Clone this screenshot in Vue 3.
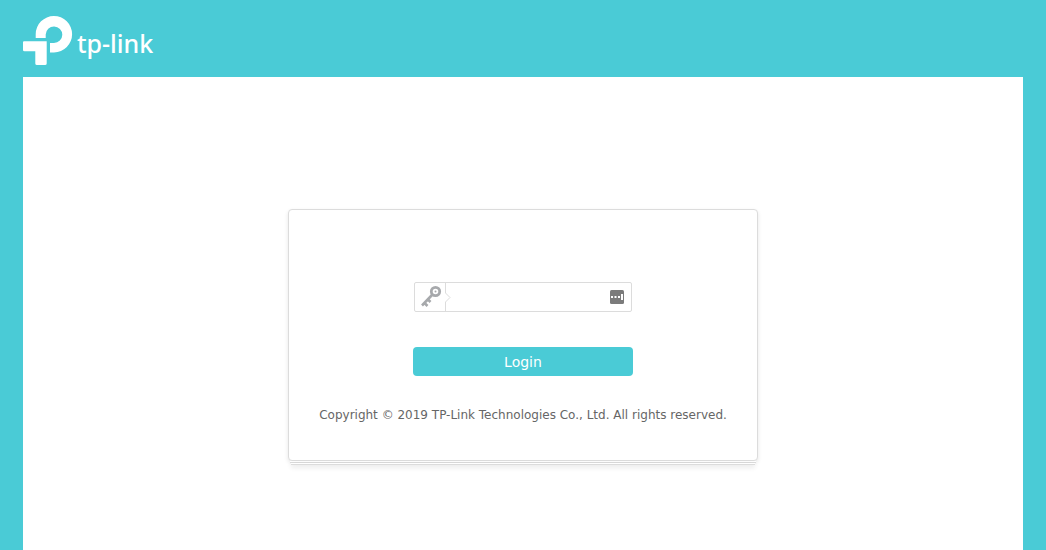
<script setup>
import { ref } from 'vue'

const password = ref('')
</script>

<template>
  <div class="page">
    <header class="header">
      <svg class="logo" width="140" height="52" viewBox="0 0 140 52" role="img" aria-label="tp-link">
        <path class="mark" d="M12.7 22V18.2A18.2 18.2 0 1 1 31 36.4H27V27H31A8.3 8.3 0 1 0 22.7 18.5V22Z" />
        <path class="mark" d="M1 25.2H23.7V47.5Q23.7 49 22 49H14Q12.3 49 12.3 47.5V35.3H1.5Q0 35.3 0 34V26.2Q0 25.2 1 25.2Z" />
        <text class="wordmark" x="54" y="37">tp-link</text>
      </svg>
    </header>
    <main class="main">
      <div class="stack">
        <form class="card" @submit.prevent>
          <div class="field">
            <label class="field-label" for="password" aria-label="Password">
              <svg width="36" height="28" viewBox="0 0 36 28">
                <path class="divider" d="M30.5 0V10L35 14.5L30.5 19V28" />
                <circle class="key-ring" cx="20.5" cy="8.5" r="4.2" />
                <circle class="key-dot" cx="20.5" cy="8.5" r="1" />
                <path class="key-stem" d="M17 12L7 22.5M9.5 20L12.5 23M13 16.5L15.5 19" />
              </svg>
            </label>
            <input id="password" v-model="password" class="password" type="password" />
            <button class="manager" type="button" aria-label="Fill password">
              <svg width="14" height="14" viewBox="0 0 14 14">
                <rect class="tile" width="14" height="14" rx="1.5" />
                <path class="dots" d="M1 6h2v2H1zM4.5 6h2v2h-2zM8 6h2v2H8zM11 4h2v6h-2z" />
              </svg>
            </button>
          </div>
          <button class="login" type="submit">Login</button>
          <p class="copyright">Copyright © 2019 TP-Link Technologies Co., Ltd. All rights reserved.</p>
        </form>
        <div class="sheet"></div>
        <div class="sheet last"></div>
      </div>
    </main>
  </div>
</template>

<style>
body {
  margin: 0;
}
</style>

<style scoped>
.page {
  box-sizing: border-box;
  min-height: 100vh;
  display: flex;
  flex-direction: column;
  padding: 0 23px;
  background: #4acbd6;
  font-family: Verdana, "DejaVu Sans", sans-serif;
}
.header {
  height: 61px;
  padding-top: 16px;
}
.logo {
  display: block;
}
.mark {
  fill: #fff;
}
.wordmark {
  fill: #fff;
  font: 500 25px "Noto Sans", sans-serif;
}
.main {
  flex: 1;
  display: flex;
  justify-content: center;
  align-items: flex-start;
  padding: 132px 16px 0;
  background: #fff;
}
.stack {
  width: 100%;
  max-width: 470px;
}
.card {
  box-sizing: border-box;
  display: flex;
  flex-direction: column;
  align-items: center;
  padding: 72px 16px 37px;
  border: 1px solid #dcdcdc;
  border-radius: 4px;
  background: #fff;
  box-shadow: 0 2px 4px rgba(0, 0, 0, 0.1);
}
.sheet {
  position: relative;
  height: 1px;
  margin: 0 2px;
  border-bottom: 1px solid #dcdcdc;
  background: #fff;
}
.last {
  margin: 0 3px;
  box-shadow: 0 2px 5px rgba(0, 0, 0, 0.16);
}
.field {
  box-sizing: border-box;
  display: flex;
  align-items: center;
  width: 218px;
  height: 30px;
  border: 1px solid #dcdcdc;
  border-radius: 2px;
}
.field-label,
.field-label svg {
  display: block;
}
.divider {
  fill: none;
  stroke: #dcdcdc;
}
.key-ring {
  fill: none;
  stroke: #a7a9ac;
  stroke-width: 2.8;
}
.key-dot {
  fill: #a7a9ac;
}
.key-stem {
  fill: none;
  stroke: #a7a9ac;
  stroke-width: 2.6;
}
.password {
  flex: 1;
  min-width: 0;
  height: 26px;
  padding: 0 4px;
  border: 0;
  outline: 0;
  background: transparent;
  font: 14px Verdana, "DejaVu Sans", sans-serif;
}
.manager {
  display: block;
  margin-right: 7px;
  padding: 0;
  border: 0;
  background: none;
}
.manager svg {
  display: block;
}
.tile {
  fill: #7b7b7b;
}
.dots {
  fill: #fff;
}
.login {
  width: 220px;
  height: 29px;
  margin-top: 35px;
  padding: 0;
  border: 0;
  border-radius: 4px;
  background: #4acbd6;
  color: #fff;
  font: 14px Verdana, "DejaVu Sans", sans-serif;
}
.copyright {
  margin: 31px 0 0;
  color: #666;
  font-size: 12px;
  line-height: 16px;
  text-align: center;
}
</style>
